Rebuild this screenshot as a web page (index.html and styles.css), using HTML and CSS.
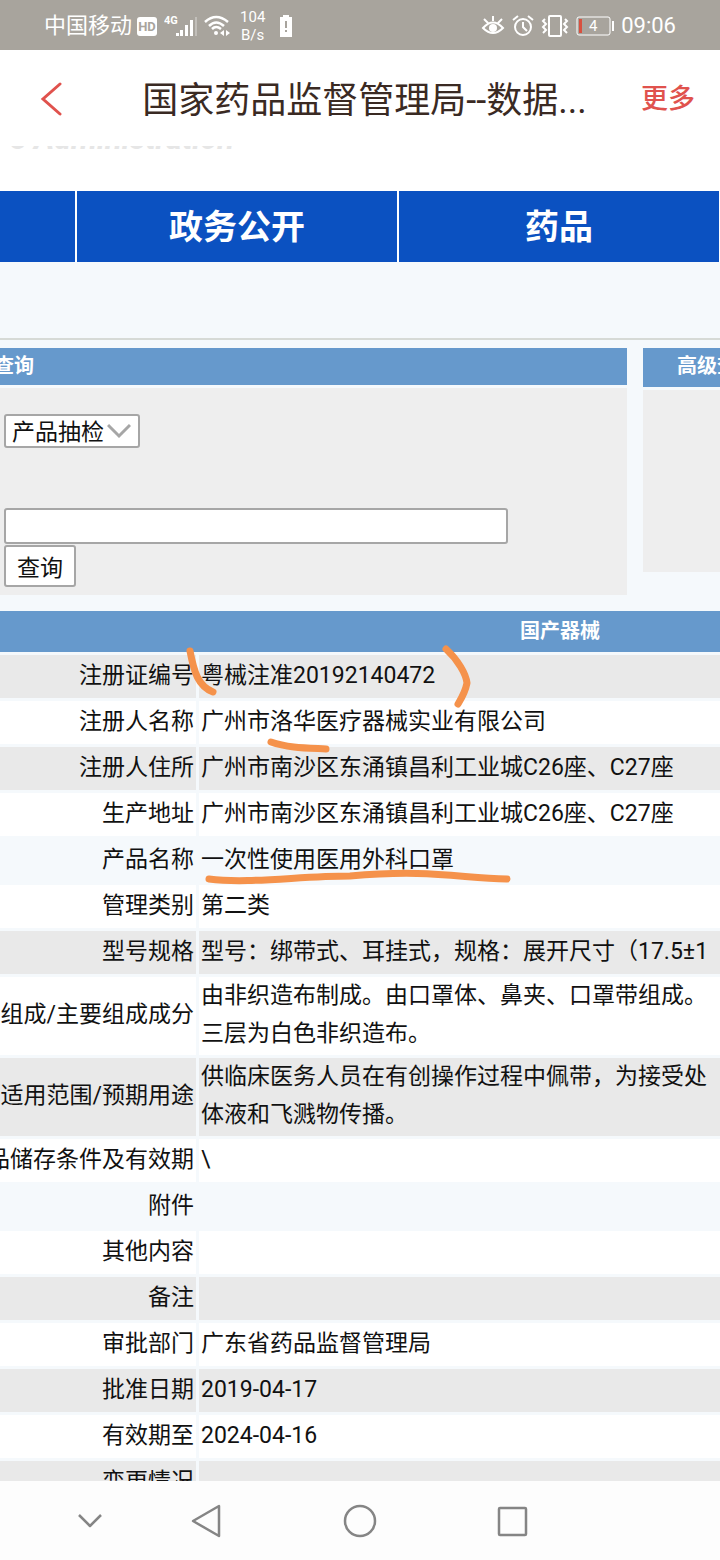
FILE: index.html
```html
<!DOCTYPE html>
<html lang="zh-CN">

<head>
    <meta charset="UTF-8">
    <meta name="viewport" content="width=device-width, initial-scale=1.0">
    <title>国家药品监督管理局--数据查询</title>
    <link rel="stylesheet" href="styles.css">
</head>

<body>
    <!-- 状态栏 -->
    <div class="status-bar">
        <div class="status-left">
            <span class="carrier">中国移动</span>
            <span class="hd">HD</span>
            <svg class="signal" width="34" height="24" viewBox="0 0 34 24">
                <text x="0" y="10" class="signal-text">4G</text>
                <g fill="#fff">
                    <rect x="12" y="19" width="3" height="3" />
                    <rect x="16" y="16" width="3" height="6" />
                    <rect x="21" y="11" width="3" height="11" />
                    <rect x="26" y="6" width="3" height="16" />
                    <rect x="31" y="3" width="2" height="19" opacity="0.3" />
                </g>
            </svg>
            <svg class="wifi" width="26" height="22" viewBox="0 0 26 22" fill="none" stroke="#fff" stroke-width="2.500">
                <path d="M1 7 Q12 -3 24 7M5 11 Q12 4 20 11M8 14 Q12 10 17 14" />
                <circle cx="12" cy="18" r="2" fill="#fff" stroke="none" />
                <path d="M20 15l-4 3 4 3zM22 15l4 3-4 3z" fill="#fff" stroke="none" />
            </svg>
            <span class="speed">104<br>B/s</span>
            <svg class="battery-alert" width="14" height="22" viewBox="0 0 14 22">
                <path d="M4 0h6v2h3v20H1V2h3z" fill="#fff" />
                <path d="M7 6v7M7 15v2" stroke="#a8a49d" stroke-width="2" />
            </svg>
        </div>
        <div class="status-right">
            <svg width="24" height="22" viewBox="0 0 24 22" fill="none" stroke="#fff" stroke-width="2">
                <path d="M2 13Q12 2 22 13Q12 23 2 13zM12 1v5M3 4l4 4M21 4l-4 4" />
                <circle cx="12" cy="13" r="4" fill="#fff" stroke="none" />
            </svg>
            <svg width="22" height="22" viewBox="0 0 22 22" fill="none" stroke="#fff" stroke-width="2">
                <circle cx="11" cy="12" r="8" />
                <path d="M11 7v5l4 4M1 5l5-4M21 5l-5-4" />
            </svg>
            <svg width="28" height="22" viewBox="0 0 28 22" fill="none" stroke="#fff" stroke-width="2">
                <rect x="8" y="1" width="12" height="20" rx="1" />
                <path d="M4 4l-2 2 3 3-3 3 3 3-3 3M24 4l2 2-3 3 3 3-3 3 3 3" />
            </svg>
            <svg width="38" height="20" viewBox="0 0 38 20">
                <rect x="1" y="1" width="33" height="18" rx="2" fill="none" stroke="#fff" />
                <rect x="3" y="3" width="3" height="14" fill="#d8503f" />
                <rect x="36" y="5" width="2" height="10" fill="#fff" />
                <text x="13" y="15" class="battery-text">4</text>
            </svg>
            <span class="time">09:06</span>
        </div>
    </div>

    <!-- 标题栏 -->
    <header class="title-bar">
        <button class="back-btn" type="button" aria-label="返回">
            <svg width="22" height="34" viewBox="0 0 22 34" fill="none" stroke="#e0524d" stroke-width="3">
                <path d="M20 2L3 17l17 15" stroke-linecap="round" />
            </svg>
        </button>
        <h1 class="page-title">国家药品监督管理局--数据...</h1>
        <button class="more-btn" type="button">更多</button>
    </header>

    <!-- 网页内容，左右都超出屏幕 -->
    <main class="viewport">
        <div class="site">
            <div class="logo">
                <div class="logo-text">s Administration</div>
            </div>
            <nav class="menu">
                <a class="menu-item" href="#">首页</a>
                <a class="menu-item" href="#">政务公开</a>
                <a class="menu-item" href="#">药品</a>
            </nav>
            <div class="banner"></div>

            <div class="search">
                <section class="panel-quick">
                    <h2 class="panel-title">快速查询</h2>
                    <form class="panel-body">
                        <div class="select-wrap">
                            <select class="type-select" aria-label="产品类别">
                                <option>产品抽检</option>
                            </select>
                            <svg class="select-arrow" width="24" height="16" viewBox="0 0 24 16" fill="none" stroke="#a6a6a6" stroke-width="3">
                                <path d="M1 2l11 11L23 2" />
                            </svg>
                        </div>
                        <input class="keyword" type="text" aria-label="关键字">
                        <button class="search-btn" type="button">查询</button>
                    </form>
                </section>
                <section class="panel-advanced">
                    <h2 class="panel-title">高级查询</h2>
                    <div class="panel-body"></div>
                </section>
            </div>

            <table class="detail">
                <colgroup>
                    <col class="col-label">
                    <col>
                </colgroup>
                <thead>
                    <tr>
                        <th class="detail-title" colspan="2">国产器械</th>
                    </tr>
                </thead>
                <tbody>
                    <tr class="gray">
                        <th class="label" scope="row">注册证编号</th>
                        <td>粤械注准20192140472</td>
                    </tr>
                    <tr class="white">
                        <th class="label" scope="row">注册人名称</th>
                        <td>广州市洛华医疗器械实业有限公司</td>
                    </tr>
                    <tr class="gray">
                        <th class="label" scope="row">注册人住所</th>
                        <td>广州市南沙区东涌镇昌利工业城C26座、C27座</td>
                    </tr>
                    <tr class="white">
                        <th class="label" scope="row">生产地址</th>
                        <td>广州市南沙区东涌镇昌利工业城C26座、C27座</td>
                    </tr>
                    <tr>
                        <th class="label" scope="row">产品名称</th>
                        <td>一次性使用医用外科口罩</td>
                    </tr>
                    <tr class="white">
                        <th class="label" scope="row">管理类别</th>
                        <td>第二类</td>
                    </tr>
                    <tr class="gray">
                        <th class="label" scope="row">型号规格</th>
                        <td>型号：绑带式、耳挂式，规格：展开尺寸（17.5±1</td>
                    </tr>
                    <tr class="white">
                        <th class="label" scope="row">组成/主要组成成分</th>
                        <td>由非织造布制成。由口罩体、鼻夹、口罩带组成。<br>三层为白色非织造布。</td>
                    </tr>
                    <tr class="gray">
                        <th class="label" scope="row">适用范围/预期用途</th>
                        <td>供临床医务人员在有创操作过程中佩带，为接受处<br>体液和飞溅物传播。</td>
                    </tr>
                    <tr class="white">
                        <th class="label" scope="row">产品储存条件及有效期</th>
                        <td>\</td>
                    </tr>
                    <tr>
                        <th class="label" scope="row">附件</th>
                        <td></td>
                    </tr>
                    <tr class="white">
                        <th class="label" scope="row">其他内容</th>
                        <td></td>
                    </tr>
                    <tr class="gray">
                        <th class="label" scope="row">备注</th>
                        <td></td>
                    </tr>
                    <tr class="white">
                        <th class="label" scope="row">审批部门</th>
                        <td>广东省药品监督管理局</td>
                    </tr>
                    <tr class="gray">
                        <th class="label" scope="row">批准日期</th>
                        <td>2019-04-17</td>
                    </tr>
                    <tr class="white">
                        <th class="label" scope="row">有效期至</th>
                        <td>2024-04-16</td>
                    </tr>
                    <tr class="gray">
                        <th class="label" scope="row">变更情况</th>
                        <td></td>
                    </tr>
                </tbody>
            </table>
        </div>

        <!-- 手写标记 -->
        <svg class="marks" width="720" height="800" viewBox="0 146 720 800" fill="none" stroke="#f5924b" stroke-width="7" stroke-linecap="round" stroke-linejoin="round">
            <path d="M190 651C194 672 198 686 213 692" />
            <path d="M446 649C458 660 466 674 467 683C465 693 461 699 458 704" />
            <path d="M271 742C288 748 307 748 326 749" />
            <path d="M209 879C248 884 300 876 350 876C430 869 460 878 507 879" />
        </svg>
    </main>

    <!-- 系统导航 -->
    <footer class="sys-nav">
        <button type="button" aria-label="收起">
            <svg width="24" height="34" viewBox="0 0 24 34"><path d="M1 11l11 11 11-11" /></svg>
        </button>
        <button type="button" aria-label="后退">
            <svg width="30" height="34" viewBox="0 0 30 34"><path d="M28 2v30L2 17z" /></svg>
        </button>
        <button type="button" aria-label="主页">
            <svg width="34" height="34" viewBox="0 0 34 34"><circle cx="17" cy="17" r="15" /></svg>
        </button>
        <button type="button" aria-label="任务">
            <svg width="32" height="34" viewBox="0 0 32 34"><rect x="3" y="4" width="27" height="27" rx="1" /></svg>
        </button>
    </footer>
</body>

</html>
```

FILE: styles.css
```css
* {
    margin: 0;
    padding: 0;
    box-sizing: border-box;
}

body {
    height: 100vh;
    display: flex;
    flex-direction: column;
    overflow: hidden;
    font-family: Roboto, "Noto Sans CJK SC", sans-serif;
    color: #111;
    background-color: #fff;
}

button,
input,
select {
    font-family: inherit;
    color: inherit;
}

svg {
    display: block;
}

/* 状态栏 */
.status-bar {
    height: 50px;
    padding: 2px 44px 0;
    display: flex;
    justify-content: space-between;
    align-items: center;
    flex: none;
    color: #fff;
    background-color: #a8a49d;
}

.status-left,
.status-right {
    display: flex;
    align-items: center;
}

.status-right {
    gap: 7px;
}

.carrier,
.time {
    font-size: 22px;
    line-height: 48px;
}

.hd {
    width: 20px;
    margin: 0 7px 0 5px;
    border-radius: 3px;
    font-size: 13px;
    font-weight: bold;
    line-height: 19px;
    text-align: center;
    color: #a8a49d;
    background-color: #fff;
}

.signal-text {
    font-size: 11px;
    font-weight: bold;
    fill: #fff;
}

.wifi {
    margin-left: 6px;
}

.speed {
    margin-left: 10px;
    font-size: 15px;
    line-height: 18px;
    text-align: center;
}

.battery-alert {
    margin-left: 14px;
}

.battery-text {
    font-size: 15px;
    fill: #fff;
}

/* 标题栏 */
.title-bar {
    height: 96px;
    padding: 2px 25px 0 40px;
    display: flex;
    justify-content: space-between;
    align-items: center;
    flex: none;
}

.back-btn,
.more-btn {
    border: none;
    background: none;
    cursor: pointer;
}

.page-title {
    padding: 4px 0 0 26px;
    font-size: 36px;
    font-weight: normal;
    line-height: 56px;
    color: #3a2a23;
}

.more-btn {
    font-size: 27px;
    font-weight: 500;
    line-height: 36px;
    color: #e0524d;
}

/* 网页内容 */
.viewport {
    flex: 1;
    min-height: 0;
    position: relative;
    overflow: hidden;
    background-color: #f5f9fc;
}

.site {
    margin: 0 -645px 0 -245px;
}

.logo {
    height: 45px;
    padding-left: 245px;
    background-color: #fff;
}

.logo-text {
    width: 234px;
    height: 3px;
    display: flex;
    justify-content: flex-end;
    align-items: flex-end;
    overflow: hidden;
    font-size: 31px;
    font-weight: bold;
    font-style: italic;
    line-height: 20px;
    white-space: nowrap;
    color: #e6e6e6;
}

.menu {
    height: 71px;
    display: flex;
}

.menu-item {
    width: 322px;
    border-right: 2px solid #fff;
    font-size: 34px;
    font-weight: bold;
    line-height: 72px;
    text-align: center;
    text-decoration: none;
    color: #fff;
    background-color: #0b51c1;
}

.banner {
    height: 78px;
    border-bottom: 2px solid #d6dad6;
}

/* 查询区 */
.search {
    padding-top: 8px;
    display: flex;
    align-items: flex-start;
    gap: 16px;
}

.panel-quick {
    width: 872px;
}

.panel-advanced {
    flex: 1;
}

.panel-title {
    height: 37px;
    padding-left: 199px;
    font-size: 20px;
    line-height: 36px;
    color: #fff;
    background-color: #69c;
}

.panel-body {
    margin-top: 3px;
    padding: 26px 0 8px 249px;
    background-color: #eee;
}

.panel-advanced .panel-title {
    height: 39px;
    padding-left: 34px;
}

.panel-advanced .panel-body {
    height: 182px;
}

.select-wrap {
    width: 136px;
    position: relative;
}

.type-select,
.keyword,
.search-btn {
    display: block;
    border: 2px solid #a6a6a6;
    border-radius: 3px;
    font-size: 23px;
    background-color: #fff;
}

.type-select {
    width: 100%;
    height: 34px;
    padding: 3px 0 0 6px;
    appearance: none;
}

.select-arrow {
    position: absolute;
    top: 9px;
    right: 9px;
    pointer-events: none;
}

.keyword {
    width: 504px;
    height: 36px;
    margin: 60px 0 1px;
}

.search-btn {
    width: 72px;
    height: 42px;
    cursor: pointer;
}

/* 详细信息 */
.detail {
    width: 100%;
    margin-top: 13px;
    table-layout: fixed;
    border-spacing: 3px;
    font-size: 23px;
    line-height: 38px;
}

.col-label {
    width: 438px;
}

.detail th,
.detail td {
    height: 43px;
    padding: 0 2px 2px;
    white-space: nowrap;
}

.detail .detail-title {
    height: 41px;
    font-size: 20px;
    color: #fff;
    background-color: #69c;
}

.detail .label {
    font-weight: normal;
    text-align: right;
}

.gray th,
.gray td {
    background-color: #e9e9e9;
}

.white th,
.white td {
    background-color: #fff;
}

.marks {
    position: absolute;
    top: 0;
    left: 0;
    pointer-events: none;
}

/* 系统导航 */
.sys-nav {
    height: 79px;
    padding: 0 154px 0 30px;
    display: grid;
    grid-template-columns: 120fr 112fr 196fr 108fr;
    flex: none;
    background-color: #fdfdfd;
}

.sys-nav button {
    display: flex;
    justify-content: center;
    align-items: center;
    border: none;
    background: none;
    cursor: pointer;
}

.sys-nav svg {
    fill: none;
    stroke: #858585;
    stroke-width: 2.500;
    stroke-linejoin: round;
}
```
